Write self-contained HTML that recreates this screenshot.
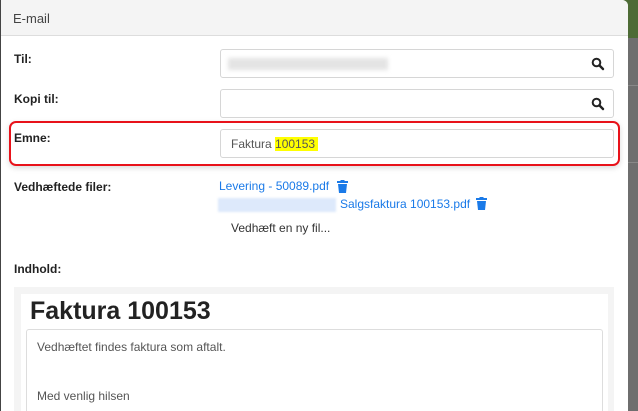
<!DOCTYPE html>
<html><head><style>
html,body{margin:0;width:638px;height:411px;overflow:hidden}
body{background:#6e6e6e;font-family:"Liberation Sans",sans-serif;position:relative}
.abs{position:absolute}
.modal{left:0;top:0;width:628px;height:411px;background:#fff;border-left:1px solid #444;border-radius:0 6px 0 0;box-sizing:border-box}
.hdr{left:1px;top:0;width:627px;height:35px;background:#f4f4f4;border-bottom:1px solid #ddd;border-radius:0 6px 0 0}
.lbl{font-size:12px;font-weight:bold;color:#222}
.inp{left:220px;width:394px;height:29px;border:1px solid #d6d6d6;border-radius:3px;box-sizing:border-box;background:#fff}
.lnk{color:#1a7ae8;font-size:12px}
</style></head><body>
<div class="abs" style="left:600px;top:0;width:38px;height:38px;background:#4d6b35"></div>
<div class="abs" style="left:628px;top:85px;width:10px;height:1px;background:#888"></div>
<div class="abs" style="left:628px;top:162px;width:10px;height:1px;background:#888"></div>
<div class="abs modal"></div>
<div class="abs hdr"></div>
<div class="abs" style="left:13px;top:11px;font-size:13px;color:#444">E-mail</div>
<div class="abs lbl" style="left:14px;top:52px">Til:</div>
<div class="abs inp" style="top:49px"></div>
<div class="abs" style="left:228px;top:58px;width:160px;height:12px;background:#e4e4e4;filter:blur(2px)"></div>
<svg class="abs" style="left:591px;top:57px" width="14" height="14" viewBox="0 0 14 14"><circle cx="5.5" cy="5.5" r="3.8" fill="none" stroke="#222" stroke-width="2"/><path d="M8.5 8.5L12 12" stroke="#222" stroke-width="2.4" stroke-linecap="round"/></svg>
<div class="abs lbl" style="left:14px;top:92px">Kopi til:</div>
<div class="abs inp" style="top:89px"></div>
<svg class="abs" style="left:591px;top:97px" width="14" height="14" viewBox="0 0 14 14"><circle cx="5.5" cy="5.5" r="3.8" fill="none" stroke="#222" stroke-width="2"/><path d="M8.5 8.5L12 12" stroke="#222" stroke-width="2.4" stroke-linecap="round"/></svg>
<div class="abs" style="left:9px;top:121px;width:611px;height:45px;border:2px solid #e8121a;border-radius:7px;box-sizing:border-box;box-shadow:0 2px 6px rgba(0,0,0,.15)"></div>
<div class="abs lbl" style="left:14px;top:131px">Emne:</div>
<div class="abs inp" style="top:129px"></div>
<div class="abs" style="left:231px;top:137px;font-size:12px;color:#555">Faktura <span style="background:#ffff00">100153&nbsp;</span></div>
<div class="abs lbl" style="left:14px;top:180px">Vedhæftede filer:</div>
<div class="abs lnk" style="left:219px;top:179px">Levering - 50089.pdf</div>
<svg class="abs" style="left:337px;top:180px" width="11" height="13" viewBox="0 0 11 13"><rect x="0" y="1" width="11" height="2" fill="#1a7ae8"/><rect x="3.5" y="0" width="4" height="2" fill="#1a7ae8"/><path d="M1 4h9l-1 9H2z" fill="#1a7ae8"/></svg>
<div class="abs" style="left:218px;top:198px;width:118px;height:14px;background:#dde9fb;filter:blur(1px)"></div>
<div class="abs lnk" style="left:340px;top:197px">Salgsfaktura 100153.pdf</div>
<svg class="abs" style="left:476px;top:197px" width="11" height="13" viewBox="0 0 11 13"><rect x="0" y="1" width="11" height="2" fill="#1a7ae8"/><rect x="3.5" y="0" width="4" height="2" fill="#1a7ae8"/><path d="M1 4h9l-1 9H2z" fill="#1a7ae8"/></svg>
<div class="abs" style="left:231px;top:221px;font-size:12px;color:#333">Vedhæft en ny fil...</div>
<div class="abs lbl" style="left:14px;top:262px">Indhold:</div>
<div class="abs" style="left:14px;top:287px;width:600px;height:124px;background:#f4f4f4"></div>
<div class="abs" style="left:21px;top:294px;width:587px;height:117px;background:#fff"></div>
<div class="abs" style="left:30px;top:297px;font-size:25px;font-weight:bold;color:#222">Faktura 100153</div>
<div class="abs" style="left:26px;top:329px;width:577px;height:82px;border:1px solid #ddd;border-bottom:none;border-radius:3px 3px 0 0;box-sizing:border-box"></div>
<div class="abs" style="left:37px;top:340px;font-size:12px;color:#555">Vedhæftet findes faktura som aftalt.</div>
<div class="abs" style="left:37px;top:389px;font-size:12px;color:#555">Med venlig hilsen</div>
</body></html>
